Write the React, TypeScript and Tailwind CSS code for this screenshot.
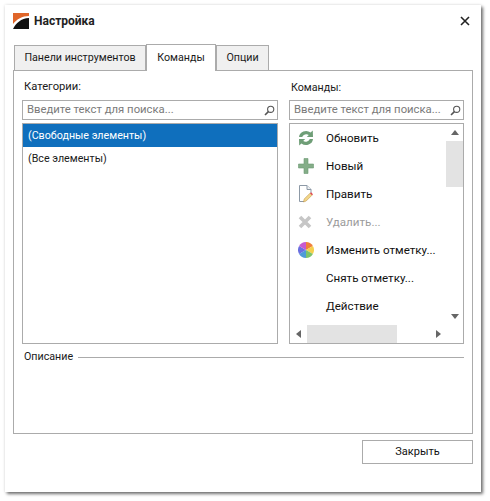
import React from "react";

function SearchIcon() {
  return (
    <svg width="11" height="11" viewBox="0 0 11 11" fill="none" stroke="#555" strokeWidth="1.1">
      <circle cx="6.7" cy="4.3" r="3.1" />
      <path d="M4.4 6.6 L1 10" strokeWidth="1.6" />
    </svg>
  );
}

function SearchBox({ className }: { className: string }) {
  return (
    <div className={`flex h-[20px] items-center justify-between border border-[#ababab] pl-[4px] pr-[2px] ${className}`}>
      <span className="whitespace-nowrap pt-[1px] text-[11.3px] text-[#7a7a7a]">Введите текст для поиска...</span>
      <SearchIcon />
    </div>
  );
}

function Refresh() {
  return (
    <svg width="16" height="16" viewBox="0 0 16 16" fill="none">
      <path d="M1 7 A7 6.5 0 0 1 12.6 2.6 L14.8 .6 L15 7 L8.8 7 L10.8 5 A4.2 3.8 0 0 0 4.2 7 Z" fill="#6f9e77" />
      <path d="M15 9 A7 6.5 0 0 1 3.4 13.4 L1.2 15.4 L1 9 L7.2 9 L5.2 11 A4.2 3.8 0 0 0 11.8 9 Z" fill="#6f9e77" />
    </svg>
  );
}

function Plus() {
  return (
    <svg width="16" height="16" viewBox="0 0 16 16">
      <path d="M6 .5 H10 V6 H15.5 V10 H10 V15.5 H6 V10 H.5 V6 H6 Z" fill="#84ad88" stroke="#6d9a74" strokeWidth=".6" />
    </svg>
  );
}

function Doc() {
  return (
    <svg width="16" height="18" viewBox="0 0 16 18" fill="none">
      <path d="M1.5 .5 H9 L13 4.5 V8 M6 16.5 H1.5 V.5" fill="#fff" stroke="#8d99a6" />
      <path d="M9 .5 V4.5 H13" stroke="#8d99a6" fill="#eef1f4" />
      <path d="M5.5 17 L6.2 14 L12 8.2 L14 10.2 L8.2 16 Z" fill="#f2d68a" stroke="#b98a3a" strokeWidth=".5" />
      <path d="M12 8.2 L13 7.2 L15 9.2 L14 10.2 Z" fill="#e2434b" />
    </svg>
  );
}

function Cross() {
  return (
    <svg width="14" height="14" viewBox="0 0 14 14">
      <path d="M2 2 L12 12 M12 2 L2 12" stroke="#c6c6c6" strokeWidth="3.6" />
    </svg>
  );
}

function Wheel() {
  const slices = [
    ["M8 8 L8 0 A8 8 0 0 1 14.9 4 Z", "#f0803c"],
    ["M8 8 L14.9 4 A8 8 0 0 1 14.9 12 Z", "#f5d04e"],
    ["M8 8 L14.9 12 A8 8 0 0 1 8 16 Z", "#7ec46a"],
    ["M8 8 L8 16 A8 8 0 0 1 1.1 12 Z", "#4f9bd8"],
    ["M8 8 L1.1 12 A8 8 0 0 1 1.1 4 Z", "#6a6fe0"],
    ["M8 8 L1.1 4 A8 8 0 0 1 8 0 Z", "#c85ad0"],
  ];
  return (
    <svg width="16" height="16" viewBox="0 0 16 16">
      {slices.map(([d, c]) => (
        <path key={c} d={d} fill={c} />
      ))}
    </svg>
  );
}

function Logo() {
  return (
    <svg width="16" height="16" viewBox="0 0 16 16" className="shrink-0">
      <rect width="16" height="16" fill="#fff" />
      <path d="M0 0 H16 V3 C9 3 4 6 0 11 Z" fill="#e0662a" />
      <path d="M0 16 C3 10 8 5.5 16 5 V16 Z" fill="#111" />
    </svg>
  );
}

function Tri({ dir }: { dir: "up" | "down" | "left" | "right" }) {
  const p = { up: "M0 6 L4 1 L8 6 Z", down: "M0 1 L8 1 L4 6 Z", left: "M6 0 L6 8 L1 4 Z", right: "M1 0 L1 8 L6 4 Z" }[dir];
  return (
    <svg width={dir === "up" || dir === "down" ? 8 : 7} height={dir === "up" || dir === "down" ? 7 : 8} viewBox={dir === "up" || dir === "down" ? "0 0 8 7" : "0 0 7 8"}>
      <path d={p} fill="#666" />
    </svg>
  );
}

const commands: { label: string; icon?: React.ReactNode; disabled?: boolean }[] = [
  { label: "Обновить", icon: <Refresh /> },
  { label: "Новый", icon: <Plus /> },
  { label: "Править", icon: <Doc /> },
  { label: "Удалить...", icon: <Cross />, disabled: true },
  { label: "Изменить отметку...", icon: <Wheel /> },
  { label: "Снять отметку..." },
  { label: "Действие" },
];

export default function App() {
  return (
    <div className="h-[501px] w-[490px] overflow-hidden bg-white pl-[5px] pt-[5px] text-[10.7px] text-[#1a1a1a] [font-family:'Roboto','Noto_Sans',sans-serif]">
      <div className="flex h-[487px] w-[476px] flex-col bg-white px-[8px] shadow-[2px_2px_3px_rgba(0,0,0,0.55),0_0_3px_rgba(0,0,0,0.12)]">
        <div className="flex h-[30px] items-center justify-between pr-[3px] pt-[1px]">
          <div className="flex items-center gap-[5px]">
            <Logo />
            <span className="text-[12px] font-bold text-[#222]">Настройка</span>
          </div>
          <svg width="10" height="10" viewBox="0 0 10 10">
            <path d="M1 1 L9 9 M9 1 L1 9" stroke="#222" strokeWidth="1.6" />
          </svg>
        </div>

        <div className="mt-[9px] flex h-[26px] items-end pl-[1px]">
          <div className="flex h-[25px] w-[132px] items-center justify-center border border-b-0 border-[#ababab] bg-[#f0f0f0] pt-[1px]">Панели инструментов</div>
          <div className="relative z-10 mb-[-1px] flex h-[27px] w-[70px] items-center justify-center border border-b-0 border-[#ababab] bg-white pt-[1px]">Команды</div>
          <div className="flex h-[25px] w-[53px] items-center justify-center border border-b-0 border-[#ababab] bg-[#f0f0f0] pt-[1px]">Опции</div>
        </div>

        <div className="flex h-[364px] flex-col border border-[#ababab] px-[8px]">
          <div className="flex gap-[11px]">
            <div className="w-[256px]">
              <div className="ml-[2px] flex h-[29px] items-end pb-[4px] text-[11.2px]">Категории:</div>
              <SearchBox className="w-[256px]" />
              <div className="mt-[3px] h-[221px] border border-[#ababab]">
                <div className="flex h-[23px] items-center bg-[#0f6fbd] pl-[5px] pt-[2px] text-white">(Свободные элементы)</div>
                <div className="flex h-[23px] items-center pl-[5px] pt-[2px]">(Все элементы)</div>
              </div>
            </div>
            <div className="w-[175px]">
              <div className="ml-[2px] flex h-[29px] items-end pb-[4px]">Команды:</div>
              <SearchBox className="w-[175px]" />
              <div className="mt-[3px] flex h-[221px] flex-col border border-[#ababab]">
                <div className="flex h-[201px] min-h-0">
                  <div className="w-[156px] overflow-hidden">
                    {commands.map((c) => (
                      <div key={c.label} className="flex h-[28px] items-center">
                        <div className="flex w-[36px] shrink-0 items-center pl-[8px]">{c.icon}</div>
                        <span className={`pt-[2px] text-[11.6px] ${c.disabled ? "text-[#9c9c9c]" : "text-[#111]"}`}>{c.label}</span>
                      </div>
                    ))}
                  </div>
                  <div className="flex w-[17px] flex-col items-center">
                    <div className="flex h-[17px] items-center justify-center">
                      <Tri dir="up" />
                    </div>
                    <div className="h-[46px] w-full bg-[#e3e3e3]" />
                    <div className="flex-1" />
                    <div className="flex h-[17px] items-center justify-center">
                      <Tri dir="down" />
                    </div>
                  </div>
                </div>
                <div className="flex h-[18px] items-center">
                  <div className="flex w-[17px] items-center justify-center">
                    <Tri dir="left" />
                  </div>
                  <div className="h-full w-[90px] bg-[#e3e3e3]" />
                  <div className="flex-1" />
                  <div className="flex w-[49px] items-center justify-center pr-[1px]">
                    <Tri dir="right" />
                  </div>
                </div>
              </div>
            </div>
          </div>
          <div className="mt-[5px] flex items-center gap-[5px] pl-[2px]">
            <span className="leading-[16px]">Описание</span>
            <div className="h-px flex-1 bg-[#ababab]" />
          </div>
        </div>

        <div className="mt-[6px] flex justify-end">
          <div className="flex h-[24px] w-[111px] items-center justify-center border border-[#ababab] text-[11px] text-[#111]">Закрыть</div>
        </div>
      </div>
    </div>
  );
}
